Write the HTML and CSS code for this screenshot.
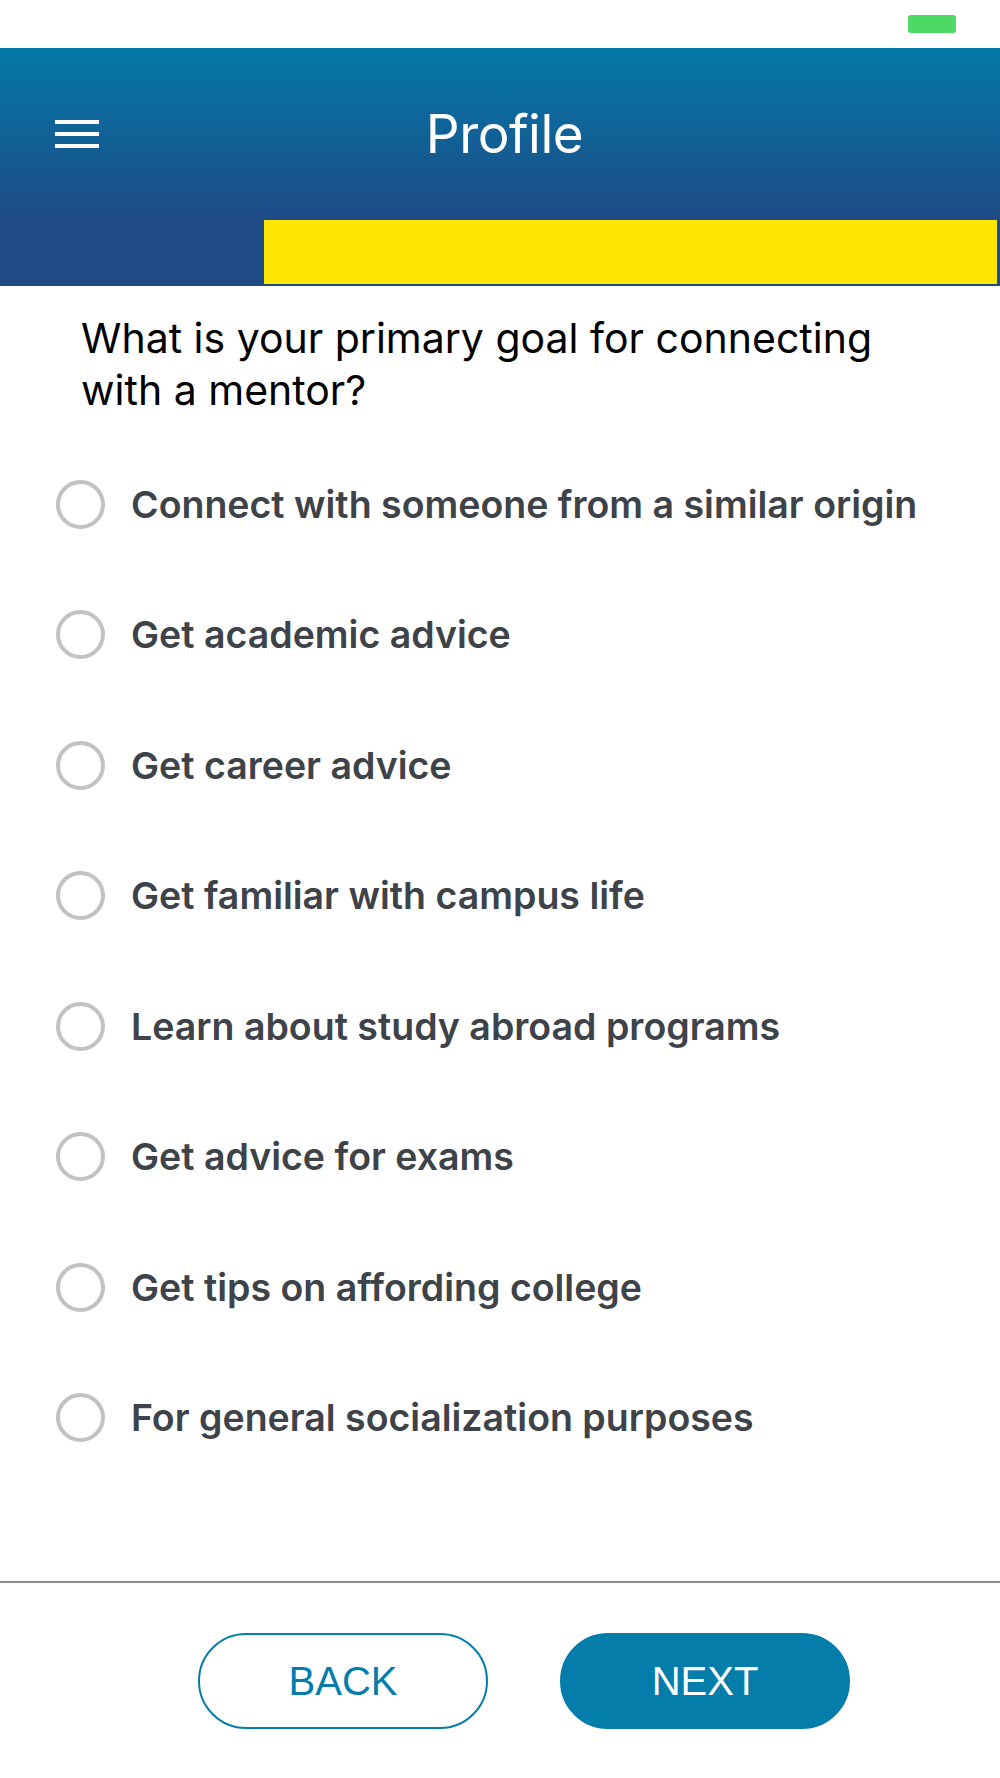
FILE: index.html
```html
<!DOCTYPE html>
<html lang="en">
<head>
<meta charset="utf-8">
<title>Profile</title>
<link rel="stylesheet" href="styles.css">
</head>
<body>
<div class="status-bar"><span class="battery"></span></div>
<header class="app-header">
  <div class="title-row">
    <button class="menu-btn" aria-label="Menu"><span></span><span></span><span></span></button>
    <h1 class="title">Profile</h1>
  </div>
  <div class="progress"><div class="progress-fill"></div></div>
</header>
<main class="content">
  <p class="question">What is your primary goal for connecting with a mentor?</p>
  <ul class="options">
    <li class="option"><span class="radio"></span><span class="label">Connect with someone from a similar origin</span></li>
    <li class="option"><span class="radio"></span><span class="label">Get academic advice</span></li>
    <li class="option"><span class="radio"></span><span class="label">Get career advice</span></li>
    <li class="option"><span class="radio"></span><span class="label">Get familiar with campus life</span></li>
    <li class="option"><span class="radio"></span><span class="label">Learn about study abroad programs</span></li>
    <li class="option"><span class="radio"></span><span class="label">Get advice for exams</span></li>
    <li class="option"><span class="radio"></span><span class="label">Get tips on affording college</span></li>
    <li class="option"><span class="radio"></span><span class="label">For general socialization purposes</span></li>
  </ul>
</main>
<footer class="footer">
  <button class="btn btn-outline">BACK</button>
  <button class="btn btn-fill">NEXT</button>
</footer>
</body>
</html>
```
FILE: styles.css
```css
* { box-sizing: border-box; }
html, body { margin: 0; padding: 0; }
body {
  width: 1000px;
  min-height: 1778px;
  background: #ffffff;
  font-family: Inter, "Liberation Sans", Arial, sans-serif;
  display: flex;
  flex-direction: column;
}
.status-bar {
  height: 48px;
  display: flex;
  justify-content: flex-end;
  align-items: flex-start;
  padding: 15px 44px 0 0;
}
.battery {
  width: 48px;
  height: 18px;
  background: #4cd964;
  border-radius: 3px;
}
.app-header {
  height: 238px;
  background: linear-gradient(to bottom, #0379a8 0px, #1e4a86 172px, #1e4a86 100%);
  display: flex;
  flex-direction: column;
}
.title-row {
  height: 172px;
  display: flex;
  align-items: center;
  position: relative;
}
.menu-btn {
  margin-left: 55px;
  width: 44px;
  height: 28px;
  padding: 0;
  border: 0;
  background: transparent;
  display: flex;
  flex-direction: column;
  justify-content: space-between;
}
.menu-btn span {
  display: block;
  height: 4px;
  width: 44px;
  background: #ffffff;
}
.title {
  position: absolute;
  left: 0;
  right: 0;
  margin: 0;
  text-align: center;
  padding-left: 9px;
  color: #ffffff;
  font-weight: 400;
  font-size: 53px;
  line-height: 53px;
  letter-spacing: -0.5px;
  pointer-events: none;
}
.progress {
  height: 66px;
  padding: 0 3px 2px 264px;
}
.progress-fill {
  height: 100%;
  background: #ffe600;
}
.content {
  padding: 26px 0 0 0;
}
.question {
  margin: 0;
  padding: 0 100px 0 81px;
  font-size: 41px;
  line-height: 52px;
  color: #000000;
}
.options {
  list-style: none;
  margin: 23px 0 0 0;
  padding: 0;
}
.option {
  height: 130.5px;
  display: flex;
  align-items: center;
  padding-left: 56px;
}
.radio {
  width: 49px;
  height: 49px;
  border: 4.5px solid #c2c2c2;
  border-radius: 50%;
  flex: none;
}
.label {
  margin-left: 26px;
  font-size: 37.5px;
  font-weight: 600;
  color: #3d4349;
}
.footer {
  margin-top: auto;
  height: 197px;
  border-top: 2px solid #8c8c8c;
  display: flex;
  justify-content: center;
  align-items: flex-start;
  gap: 72px;
  padding: 50px 0 0 48px;
}
.btn {
  width: 290px;
  height: 96px;
  border-radius: 48px;
  font-family: "Liberation Sans", Arial, sans-serif;
  font-size: 40px;
  font-weight: 400;
  border: 2px solid #057dab;
  padding: 0;
}
.btn-outline {
  background: #ffffff;
  color: #057dab;
}
.btn-fill {
  background: #057dab;
  color: #ffffff;
}
```
